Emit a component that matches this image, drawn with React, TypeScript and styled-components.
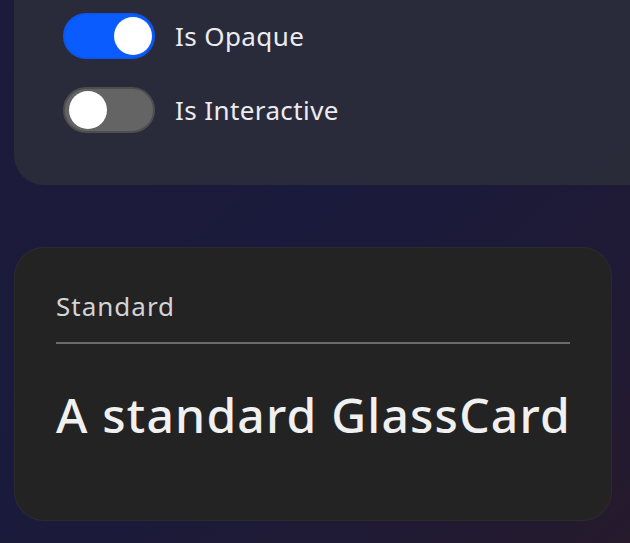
import React, { useState } from 'react';
import styled, { createGlobalStyle } from 'styled-components';

const GlobalStyle = createGlobalStyle`
  html, body {
    margin: 0;
    padding: 0;
    height: 100%;
    overflow: hidden;
  }
  body {
    font-family: 'Noto Sans', 'Open Sans', sans-serif;
    background: linear-gradient(135deg, #1c1b3a 0%, #1a1a3c 45%, #201a34 80%, #261a2c 100%);
    color: #eeeeee;
  }
`;

const Page = styled.div`
  min-height: 543px;
  padding-left: 14px;
  display: flex;
  flex-direction: column;
  gap: 62px;
`;

const ControlsPanel = styled.div`
  background: rgba(44, 45, 58, 0.88);
  border-radius: 0 0 0 30px;
  padding: 13px 0 52px 49px;
  display: flex;
  flex-direction: column;
  gap: 28px;
`;

const ToggleRow = styled.label`
  display: flex;
  align-items: center;
  gap: 20px;
  font-size: 26px;
  letter-spacing: 0.4px;
  color: #ececf0;
  cursor: pointer;
`;

const Track = styled.span<{ $on: boolean }>`
  position: relative;
  width: 92px;
  height: 46px;
  box-sizing: border-box;
  border-radius: 23px;
  background: ${(p) => (p.$on ? '#0a5cff' : '#646464')};
  border: 2px solid ${(p) => (p.$on ? '#0b58f0' : '#4e4e4e')};
  flex-shrink: 0;
`;

const Thumb = styled.span<{ $on: boolean }>`
  position: absolute;
  top: 2px;
  left: ${(p) => (p.$on ? '49px' : '4px')};
  width: 38px;
  height: 38px;
  border-radius: 50%;
  background: #ffffff;
`;

const Card = styled.section`
  width: 598px;
  box-sizing: border-box;
  background: #232323;
  border: 1px solid rgba(255, 255, 255, 0.04);
  border-radius: 30px;
  padding: 40px 41px 76px;
`;

const CardTitle = styled.div`
  font-size: 26px;
  letter-spacing: 1px;
  color: #d4d4d4;
  padding-bottom: 18px;
  border-bottom: 2px solid #6a6a6a;
`;

const CardBody = styled.div`
  margin-top: 42px;
  font-size: 48px;
  font-weight: 500;
  letter-spacing: 1.2px;
  white-space: nowrap;
  color: #f0f0f0;
  line-height: 1.2;
`;

const Toggle: React.FC<{ label: string; initial: boolean }> = ({ label, initial }) => {
  const [on, setOn] = useState(initial);
  return (
    <ToggleRow onClick={() => setOn(!on)}>
      <Track $on={on}>
        <Thumb $on={on} />
      </Track>
      {label}
    </ToggleRow>
  );
};

export default function App() {
  return (
    <>
      <GlobalStyle />
      <Page>
        <ControlsPanel>
          <Toggle label="Is Opaque" initial={true} />
          <Toggle label="Is Interactive" initial={false} />
        </ControlsPanel>
        <Card>
          <CardTitle>Standard</CardTitle>
          <CardBody>A standard GlassCard</CardBody>
        </Card>
      </Page>
    </>
  );
}
